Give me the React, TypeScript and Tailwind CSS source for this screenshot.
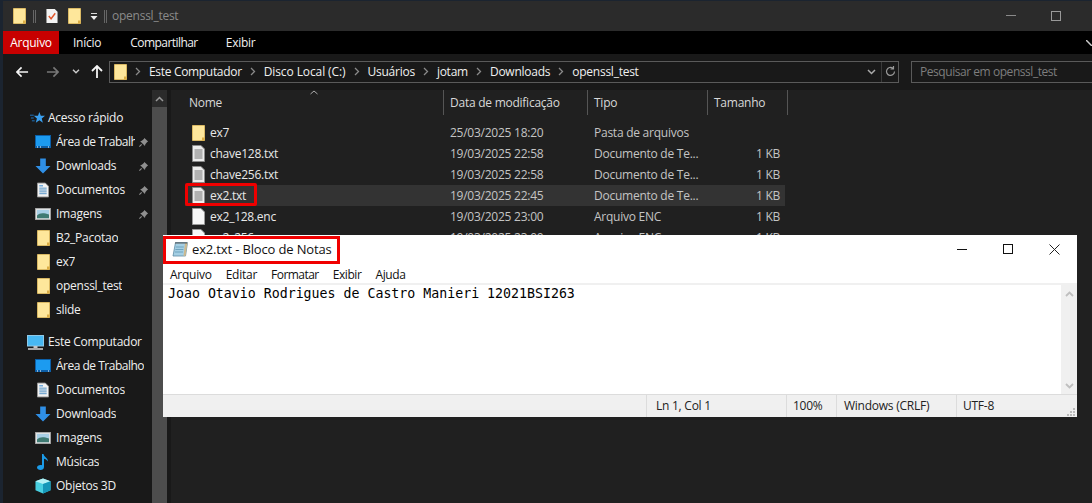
import React from "react";

const Folder = ({ className = "" }: { className?: string }) => (
  <svg width="13" height="16" viewBox="0 0 13 16" className={className}>
    <path d="M.5.5h12v15H.5z" fill="#fee79b" stroke="#eec766" strokeWidth="0.800" />
    <path d="M10 15.500v-3h2.500v3z" fill="#dcae45" />
  </svg>
);
const TxtIcon = () => (
  <svg width="13" height="17" viewBox="0 0 13 17">
    <path d="M.5.5h8.500L12.500 4v12.500H.5z" fill="#ececec" stroke="#8a8a8a" />
    <path d="M2.500 5h8M2.500 7h8M2.500 9h8M2.500 11h8M2.500 13h8" stroke="#777" strokeWidth="1" />
  </svg>
);
const BlankIcon = () => (
  <svg width="13" height="17" viewBox="0 0 13 17">
    <path d="M.5.5h8.500L12.500 4v12.500H.5z" fill="#f6f6f6" stroke="#9a9a9a" />
  </svg>
);
const PngIcon = () => (
  <svg width="13" height="17" viewBox="0 0 13 17">
    <path d="M.5.5h8.500L12.500 4v12.500H.5z" fill="#dcdcdc" stroke="#8a8a8a" />
    <rect x="2.500" y="5.500" width="8" height="7" fill="#1668c4" />
    <path d="M2.500 12.500l3-3 2 2 3-3v4z" fill="#5fb2f0" />
  </svg>
);
const Pin = () => (
  <svg width="11" height="11" viewBox="0 0 12 12" className="block">
    <path d="M7 1l4 4-1.200.6L8 8l-.4 1.800L2.400 4.600 4.200 4.200l2.200-2z" fill="#8f8f8f" />
    <path d="M4 8l-2.500 2.500" stroke="#8f8f8f" strokeWidth="1.200" />
  </svg>
);
const Desktop = () => (
  <svg width="16" height="14" viewBox="0 0 16 14">
    <rect x="0.500" y="0.500" width="15" height="12" fill="#1c9bf0" stroke="#0b5fa8" />
    <path d="M1 11h14v2H1z" fill="#0c5ea6" />
    <path d="M2 12h1M5 12h1M13 12h1" stroke="#fff" />
  </svg>
);
const DownIco = () => (
  <svg width="16" height="16" viewBox="0 0 17 16">
    <path d="M5.500 0h6v8H16.500L8.500 16 .5 8h5z" fill="#2f8fe6" />
  </svg>
);
const DocIco = () => (
  <svg width="12" height="16" viewBox="0 0 13 16">
    <path d="M.5.5h8.500L12.500 4v11.500H.5z" fill="#f2f2f2" stroke="#999" />
    <path d="M2.500 3.500h4" stroke="#1f7fd1" />
    <path d="M2.500 6h8M2.500 8h8M2.500 10h8M2.500 12h8" stroke="#4d8fc4" />
  </svg>
);
const ImgIco = () => (
  <svg width="16" height="12" viewBox="0 0 17 13">
    <rect x="0.500" y="0.500" width="16" height="12" fill="#e6e6e6" stroke="#aaa" />
    <rect x="2" y="2" width="13" height="9" fill="#a8cfe6" />
    <path d="M2 8c3-3 7-3 13-1v4H2z" fill="#3f7a72" />
  </svg>
);
const Music = () => (
  <svg width="12" height="16" viewBox="0 0 12 16">
    <path d="M5 0h1.500c.5 3 4.500 3.500 4.500 7.500-1-1.500-2.500-2.500-4-2.800V13c0 1.800-1.500 3-3.500 3S0 15 0 13.500 1.500 11 3.500 11c.6 0 1 .1 1.500.3z" fill="#1b9be8" />
  </svg>
);
const Cube = () => (
  <svg width="16" height="16" viewBox="0 0 17 16">
    <path d="M8.500 0l8 3v9.500l-8 3.500-8-3.500V3z" fill="#48cfe0" />
    <path d="M8.500 0l8 3-8 3-8-3z" fill="#b5f1f5" />
    <path d="M8.500 6l8-3v9.500l-8 3.500z" fill="#1697b8" />
  </svg>
);
const Monitor = () => (
  <svg width="17" height="15" viewBox="0 0 17 15">
    <rect x="0.500" y="0.500" width="16" height="10.500" fill="#47b8f2" stroke="#8fc9e8" />
    <path d="M6.500 11h4v2h-4z" fill="#c4c4c4" />
    <path d="M1 13h15v2H1z" fill="#a8a8a8" />
  </svg>
);
const Chev = () => (
  <svg width="6" height="9" viewBox="0 0 6 9" className="mx-[8px] shrink-0">
    <path d="M1 1l3.500 3.500L1 8" fill="none" stroke="#8a8a8a" strokeWidth="1.300" />
  </svg>
);
const NotepadIco = () => (
  <svg width="16" height="16" viewBox="0 0 16 16">
    <path d="M3.500 1.500h12L13.500 15H1z" fill="#a4cfe4" stroke="#5d8aa3" strokeWidth="0.800" />
    <path d="M13 2.500L11.500 15H13.500L15.500 1.500z" fill="#cdb98e" />
    <path d="M3.500 2h11.500" stroke="#555" strokeWidth="2" strokeDasharray="1 1" />
    <path d="M3.800 6h8M3.400 8.500h8M3 11h8" stroke="#6fa3bd" />
  </svg>
);

const quick = [
  { n: "Área de Trabalho", i: <Desktop />, pin: true },
  { n: "Downloads", i: <DownIco />, pin: true },
  { n: "Documentos", i: <DocIco />, pin: true },
  { n: "Imagens", i: <ImgIco />, pin: true },
  { n: "B2_Pacotao", i: <Folder /> },
  { n: "ex7", i: <Folder /> },
  { n: "openssl_test", i: <Folder /> },
  { n: "slide", i: <Folder /> },
];
const pc = [
  { n: "Área de Trabalho", i: <Desktop /> },
  { n: "Documentos", i: <DocIco /> },
  { n: "Downloads", i: <DownIco /> },
  { n: "Imagens", i: <ImgIco /> },
  { n: "Músicas", i: <Music /> },
  { n: "Objetos 3D", i: <Cube /> },
];
const files = [
  { n: "ex7", d: "25/03/2025 18:20", t: "Pasta de arquivos", s: "", i: <Folder /> },
  { n: "chave128.txt", d: "19/03/2025 22:58", t: "Documento de Te...", s: "1 KB", i: <TxtIcon /> },
  { n: "chave256.txt", d: "19/03/2025 22:58", t: "Documento de Te...", s: "1 KB", i: <TxtIcon /> },
  { n: "ex2.txt", d: "19/03/2025 22:45", t: "Documento de Te...", s: "1 KB", i: <TxtIcon />, sel: true },
  { n: "ex2_128.enc", d: "19/03/2025 23:00", t: "Arquivo ENC", s: "1 KB", i: <BlankIcon /> },
  { n: "ex2_256.enc", d: "19/03/2025 23:00", t: "Arquivo ENC", s: "1 KB", i: <BlankIcon /> },
];

const SideRow = ({ n, i, pin }: { n: string; i: React.ReactNode; pin?: boolean }) => (
  <div className="h-6 flex items-center pl-[29px] text-[#f0f0f0]">
    <span className="w-[24px] flex justify-center shrink-0 -ml-[1px] mr-[1px]">{i}</span>
    <span className={`whitespace-nowrap overflow-hidden ${pin ? "w-[79px]" : ""} ${n.startsWith("Área") ? "tracking-[-0.5px]" : ""}`}>{n}</span>
    {pin && <span className="ml-[3px]"><Pin /></span>}
  </div>
);

export default function App() {
  return (
    <div className="w-[1092px] h-[503px] relative overflow-hidden bg-[#1b2430] pl-[3px] pt-[1px] text-[12px] leading-[16px] font-['Open_Sans','Noto_Sans',sans-serif] tracking-[-0.25px]">
      <div className="h-[502px] flex flex-col bg-[#202020]">
        {/* title */}
        <div className="h-[30px] bg-[#2b2b2b] flex items-center shrink-0 pl-[10px] text-[#8f8f8f]">
          <Folder />
          <span className="ml-[7px] w-[3px] h-[13px] border-x border-[#666]" />
          <span className="ml-[10px]">
            <svg width="12" height="16" viewBox="0 0 13 16" className="block">
              <path d="M.5.5h9L12.500 3.500v12H.5z" fill="#f3f3f3" />
              <path d="M3 8l2.500 3L10 5" fill="none" stroke="#e2562a" strokeWidth="1.500" />
            </svg>
          </span>
          <span className="ml-[10px] flex"><Folder /></span>
          <svg width="8" height="8" viewBox="0 0 8 8" className="ml-[9px] mt-[1px]">
            <path d="M1 .5h6" stroke="#ddd" />
            <path d="M.5 3h7L4 7z" fill="#eee" />
          </svg>
          <span className="ml-[6px] w-[3px] h-[13px] border-x border-[#666]" />
          <span className="ml-[5px] text-[#8a8a8a]">openssl_test</span>
          <span className="ml-auto mr-[31px] flex items-center gap-[35px] -mt-[1px]">
            <span className="block w-[10px] h-[1px] bg-[#8a8a8a]" />
            <span className="block w-[10px] h-[10px] border border-[#999]" />
          </span>
        </div>
        {/* ribbon */}
        <div className="h-[23px] bg-black flex items-center shrink-0 text-[#f0f0f0]">
          <span className="h-full w-[56px] bg-[#c80000] flex items-center justify-center text-white">Arquivo</span>
          <span className="ml-[14px]">Início</span>
          <span className="ml-[29px] tracking-[-0.55px]">Compartilhar</span>
          <span className="ml-[28px]">Exibir</span>
          <svg width="6" height="6" viewBox="0 0 6 6" className="ml-auto">
            <path d="M0 0l6 6" stroke="#ccc" strokeWidth="1.500" />
          </svg>
        </div>
        {/* address */}
        <div className="h-[36px] bg-[#191919] flex items-center shrink-0 pb-[1px]">
          <svg width="13" height="12" viewBox="0 0 14 12" className="ml-[13px]">
            <path d="M6 1L1 6l5 5M1.500 6H13" fill="none" stroke="#f5f5f5" strokeWidth="1.800" />
          </svg>
          <svg width="13" height="12" viewBox="0 0 14 12" className="ml-[17px]">
            <path d="M8 1l5 5-5 5M12.500 6H1" fill="none" stroke="#777" strokeWidth="1.800" />
          </svg>
          <svg width="8" height="5" viewBox="0 0 8 5" className="ml-[13px]">
            <path d="M1 .8L4 3.800 7 .8" fill="none" stroke="#ccc" strokeWidth="1.400" />
          </svg>
          <svg width="12" height="13" viewBox="0 0 12 13" className="ml-[11px]">
            <path d="M1 6l5-5 5 5M6 1.500V13" fill="none" stroke="#f5f5f5" strokeWidth="1.800" />
          </svg>
          <div className="ml-[6px] w-[790px] h-[22px] border border-[#5a5a5a] flex items-center pl-[4px] text-[#f0f0f0]">
            <Folder />
            <Chev />
            <span className="tracking-[-0.32px]">Este Computador</span><Chev />
            <span className="tracking-[-0.1px]">Disco Local (C:)</span><Chev />
            <span>Usuários</span><Chev />
            <span>jotam</span><Chev />
            <span>Downloads</span><Chev />
            <span>openssl_test</span>
            <span className="ml-auto mr-[5px] flex">
              <svg width="9" height="6" viewBox="0 0 9 6"><path d="M1 1l3.500 3.500L8 1" fill="none" stroke="#aaa" strokeWidth="1.500" /></svg>
            </span>
            <span className="h-full border-l border-[#3a3a3a] w-[17px] flex items-center justify-center">
              <svg width="11" height="11" viewBox="0 0 11 11"><path d="M9.500 5.500a4 4 0 1 1-1.500-3.200M8.500 0v3h-3" fill="none" stroke="#999" strokeWidth="1.200" /></svg>
            </span>
          </div>
          <div className="ml-[12px] flex-1 h-[22px] border border-[#5a5a5a] border-r-0 flex items-center pl-[8px] text-[#7d7d7d] whitespace-nowrap tracking-[-0.45px]">Pesquisar em openssl_test</div>
        </div>
        {/* main */}
        <div className="flex flex-1 min-h-0">
          <div className="w-[149px] bg-[#191919] shrink-0 pt-[16px] text-[#f0f0f0]">
            <div className="h-6 flex items-center pl-[27px]">
              <svg width="15" height="14" viewBox="0 0 16 14" className="mr-[3px]">
                <path d="M10 .5l1.500 4 4.500.2-3.500 2.800 1.200 4.500-3.700-2.500-3.800 2.500 1.200-4.500L4 4.700l4.500-.2z" fill="#3aa0f0" />
                <path d="M0 4h4M1 7h3M2 10h3" stroke="#1f78c4" />
              </svg>
              Acesso rápido
            </div>
            {quick.map((r) => <SideRow key={r.n} {...r} />)}
            <div className="h-6 flex items-center pl-[24px] mt-[8px]">
              <span className="mr-[4px] flex"><Monitor /></span>
              Este Computador
            </div>
            {pc.map((r) => <SideRow key={r.n} {...r} />)}
          </div>
          {/* sidebar scrollbar */}
          <div className="w-[15px] bg-[#2b2b2b] shrink-0 flex flex-col items-center">
            <span className="h-[17px] flex items-center shrink-0">
              <svg width="9" height="6" viewBox="0 0 9 6"><path d="M1 5l3.500-3.500L8 5" fill="none" stroke="#999" strokeWidth="1.500" /></svg>
            </span>
            <span className="w-full flex-1 bg-[#4d4d4d]" />
          </div>
          <div className="w-[4px] bg-[#191919] shrink-0" />
          {/* list */}
          <div className="flex-1 relative min-w-0 text-[#e8e8e8]">
            <div className="h-[25px] flex text-[#d8d8d8] relative">
              <div className="w-[273px] pl-[18px] pt-[5px] border-r border-[#555] shrink-0">Nome</div>
              <div className="w-[144px] pl-[6px] pt-[5px] border-r border-[#555] shrink-0">Data de modificação</div>
              <div className="w-[120px] pl-[6px] pt-[5px] border-r border-[#555] shrink-0">Tipo</div>
              <div className="w-[80px] pl-[6px] pt-[5px] border-r border-[#555] shrink-0">Tamanho</div>
              <svg width="8" height="5" viewBox="0 0 8 5" className="absolute left-[139px] top-[0px]">
                <path d="M.5 4L4 1l3.500 3" fill="none" stroke="#aaa" />
              </svg>
            </div>
            <div className="pt-[7px]">
              {files.map((f) => (
                <div key={f.n} className={`h-[21px] ml-[14px] w-[600px] flex items-center ${f.sel ? "bg-[#333333]" : ""}`}>
                  <span className="w-[25px] pl-[7px] flex shrink-0">{f.i}</span>
                  <span className="w-[240px] shrink-0 whitespace-nowrap">{f.n}</span>
                  <span className="w-[144px] shrink-0 text-[#c4c4c4]">{f.d}</span>
                  <span className="w-[113px] shrink-0 text-[#c4c4c4] whitespace-nowrap">{f.t}</span>
                  <span className="w-[73px] shrink-0 text-right text-[#c4c4c4]">{f.s}</span>
                </div>
              ))}
              <div className="h-[21px] ml-[14px] w-[600px] flex items-center mt-[147px]">
                <span className="w-[25px] pl-[7px] flex shrink-0"><PngIcon /></span>
                <span className="w-[240px] shrink-0">decrip2.png</span>
                <span className="w-[144px] shrink-0 text-[#c4c4c4]">19/03/2025 23:09</span>
                <span className="w-[113px] shrink-0 text-[#c4c4c4]">Arquivo PNG</span>
                <span className="w-[73px] shrink-0 text-right text-[#c4c4c4]">135 KB</span>
              </div>
            </div>
          </div>
        </div>
      </div>

      {/* Red highlight on explorer */}
      <div className="absolute left-[185px] top-[183px] w-[72px] h-[23px] border-[3px] border-[#f00000] rounded-[2px]" />

      {/* Notepad window */}
      <div className="absolute left-[163px] top-[235px] w-[914px] h-[182px] bg-white flex flex-col text-black">
        <div className="h-[28px] flex items-center shrink-0 relative pl-[9px]">
          <NotepadIco />
          <span className="ml-[4px] text-[#111] text-[13px] tracking-[-0.15px] whitespace-nowrap">ex2.txt - Bloco de Notas</span>
          <span className="ml-auto flex items-center">
            <span className="w-[46px] flex justify-center"><span className="block w-[10px] h-[1px] bg-[#111]" /></span>
            <span className="w-[46px] flex justify-center"><span className="block w-[10px] h-[10px] border border-[#111]" /></span>
            <span className="w-[46px] flex justify-center">
              <svg width="11" height="11" viewBox="0 0 11 11"><path d="M.5.5l10 10M10.500.5l-10 10" stroke="#222" /></svg>
            </span>
          </span>
          <div className="absolute left-0 top-[1px] w-[177px] h-[28px] border-[3px] border-[#f00000]" />
        </div>
        <div className="h-[20px] flex items-center gap-[14px] pl-[7px] pt-[3px] shrink-0 text-[#111] tracking-[-0.25px]">
          <span>Arquivo</span><span>Editar</span><span className="tracking-[-0.55px]">Formatar</span><span className="tracking-[-0.4px]">Exibir</span><span className="tracking-[-0.4px]">Ajuda</span>
        </div>
        <div className="flex-1 flex border-t-2 border-[#f0f0f0] min-h-0">
          <div className="flex-1 pl-[5px] pt-[1px] font-['DejaVu_Sans_Mono',monospace] text-[13.25px] tracking-[0px] leading-[16px] text-black whitespace-nowrap">
            Joao Otavio Rodrigues de Castro Manieri 12021BSI263
          </div>
          <div className="w-[16px] flex flex-col justify-between items-center bg-[#f0f0f0]">
            <svg width="9" height="6" viewBox="0 0 9 6" className="mt-[6px]"><path d="M1 5l3.500-3.500L8 5" fill="none" stroke="#bfbfbf" strokeWidth="1.800" /></svg>
            <svg width="9" height="6" viewBox="0 0 9 6" className="mb-[5px]"><path d="M1 1l3.500 3.500L8 1" fill="none" stroke="#bfbfbf" strokeWidth="1.800" /></svg>
          </div>
        </div>
        <div className="h-[23px] bg-[#f0f0f0] border-t border-[#dcdcdc] flex items-center shrink-0 text-[#222] relative">
          <span className="w-[484px] h-full border-r border-[#dcdcdc]" />
          <span className="w-[140px] pl-[9px] h-full border-r border-[#dcdcdc] flex items-center">Ln 1, Col 1</span>
          <span className="w-[50px] pl-[6px] h-full border-r border-[#dcdcdc] flex items-center">100%</span>
          <span className="w-[120px] pl-[7px] h-full border-r border-[#dcdcdc] flex items-center whitespace-nowrap">Windows (CRLF)</span>
          <span className="pl-[6px]">UTF-8</span>
          <svg width="9" height="9" viewBox="0 0 9 9" className="absolute right-[1px] bottom-[1px]">
            <path d="M6 1h2v2H6zM3 4h2v2H3zM6 4h2v2H6zM0 7h2v2H0zM3 7h2v2H3zM6 7h2v2H6z" fill="#bbb" />
          </svg>
        </div>
      </div>
    </div>
  );
}
